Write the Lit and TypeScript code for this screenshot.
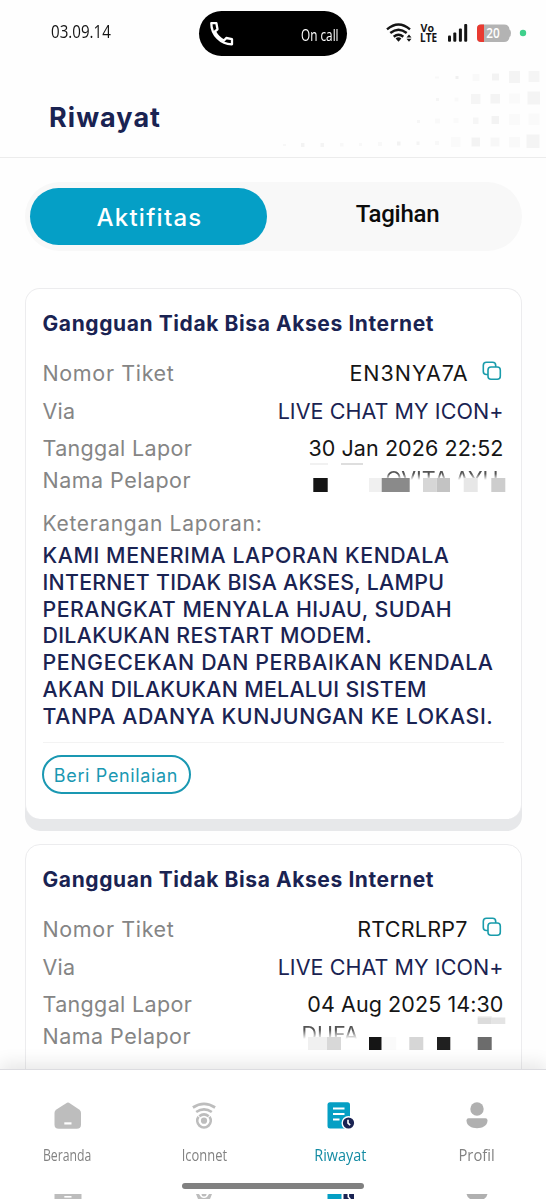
import { LitElement, html, svg, css } from "lit";
import { customElement, property } from "lit/decorators.js";

type Block = [number, number, number, number, string];

interface Ticket {
  title: string;
  code: string;
  codeTracking: number;
  via: string;
  date: string;
  name: string;
  nameClass: string;
  blocks: Block[];
  description?: [string, number][];
}

const TICKETS: Ticket[] = [
  {
    title: "Gangguan Tidak Bisa Akses Internet",
    code: "EN3NYA7A",
    codeTracking: 1,
    via: "LIVE CHAT MY ICON+",
    date: "30 Jan 2026 22:52",
    name: "OVITA AYU",
    nameClass: "first",
    blocks: [
      [10, 2, 18, 2, "#f1f1f1"],
      [41, 2, 22, 2, "#dedede"],
      [13.3, 17, 14.4, 14, "#151515"],
      [69, 17, 12.7, 14, "#f0f0f0"],
      [81.7, 17, 28, 14, "#8a8a8a"],
      [123, 17, 13.7, 14, "#d6d6d6"],
      [136.7, 17, 13.3, 14, "#c3c3c3"],
      [163.7, 17, 14, 14, "#e7e7e7"],
      [191.3, 17, 14, 14, "#cdcdcd"],
    ],
    description: [
      ["KAMI MENERIMA LAPORAN KENDALA", 0.59],
      ["INTERNET TIDAK BISA AKSES, LAMPU", 0.28],
      ["PERANGKAT MENYALA HIJAU, SUDAH", 0.5],
      ["DILAKUKAN RESTART MODEM.", 0.35],
      ["PENGECEKAN DAN PERBAIKAN KENDALA", 0.66],
      ["AKAN DILAKUKAN MELALUI SISTEM", 0.32],
      ["TANPA ADANYA KUNJUNGAN KE LOKASI.", 0.62],
    ],
  },
  {
    title: "Gangguan Tidak Bisa Akses Internet",
    code: "RTCRLRP7",
    codeTracking: 0.25,
    via: "LIVE CHAT MY ICON+",
    date: "04 Aug 2025 14:30",
    name: "DUFA",
    nameClass: "second",
    blocks: [
      [177.7, -1, 14, 4, "#f0f0f0"],
      [177.7, 0.5, 14, 6.5, "#dcdcdc"],
      [191.7, 0.5, 13.6, 6.5, "#e4e4e4"],
      [8, 20, 19, 13, "#f0f0f0"],
      [27, 20, 14, 13, "#d8d8d8"],
      [69, 20, 12.7, 13, "#151515"],
      [81.7, 20, 14.6, 13, "#fafafa"],
      [109.3, 20, 14, 13, "#d6d6d6"],
      [137, 20, 13.3, 13, "#202020"],
      [177.7, 20, 14, 13, "#6c6c6c"],
    ],
  },
];

const DOTS: Block[] = [
  [435, 76.5, 4, 2, "#f8f8f8"], [455.5, 76, 3, 3, "#f0f0f0"], [472.5, 74, 7, 7, "#f9f9f9"],
  [492, 73.5, 7, 7, "#f3f3f3"], [509, 71, 11, 12, "#f4f4f4"], [528.5, 71, 11, 11, "#f5f5f5"],
  [436, 98, 3, 3, "#f5f5f5"], [454.5, 97.5, 4, 4, "#f9f9f9"], [471, 94, 9.5, 10, "#f5f5f5"],
  [490.5, 94, 9.5, 9.5, "#f4f4f4"], [509, 93.5, 11, 10, "#fafafa"], [527.5, 91.5, 12.5, 13, "#f4f4f4"],
  [417, 120, 3, 3, "#f6f6f6"], [435, 118.5, 5, 5, "#f9f9f9"], [453.5, 118, 5, 5, "#fafafa"],
  [473, 117.5, 5.5, 6.5, "#f6f6f6"], [491.5, 116, 7.5, 8, "#f3f3f3"], [509, 114, 11, 11, "#fafafa"], [528.5, 113.5, 11, 11.5, "#fafafa"],
  [283, 144, 3, 2, "#f7f7f7"], [301, 143, 3.5, 4, "#f3f3f3"], [320.5, 143, 3.5, 4, "#f4f4f4"],
  [340, 143, 3.5, 3.5, "#f8f8f8"], [359, 143, 3, 3, "#f8f8f8"], [378, 142, 4, 4, "#f8f8f8"],
  [397, 141.5, 3.5, 4, "#f2f2f2"], [416.5, 141.5, 3, 3.5, "#f4f4f4"], [435, 141, 4, 4, "#f8f8f8"],
  [451, 137, 9.5, 10, "#fafafa"], [471.5, 137.5, 8.5, 9, "#f3f3f3"], [490.5, 137.5, 9, 9, "#f7f7f7"],
  [509, 137, 11, 10.5, "#f9f9f9"], [526.5, 134.5, 13, 13.5, "#f4f4f4"],
];

const rects = (blocks: Block[]) =>
  blocks.map(([x, y, w, h, fill]) => svg`<rect x=${x} y=${y} width=${w} height=${h} fill=${fill}></rect>`);

@customElement("status-bar")
class StatusBar extends LitElement {
  static styles = css`
    :host { display: flex; position: relative; height: 66px; align-items: center; font-family: "Open Sans", sans-serif; }
    .time { margin-left: 51px; width: 148px; font-size: 18px; line-height: 24px; color: #151515; margin-top: -4px; }
    .narrow { display: inline-block; transform-origin: left center; white-space: nowrap; }
    .time .narrow { transform: scaleX(0.84); }
    .island { width: 148px; height: 45px; border-radius: 23px; background: #000; display: flex; align-items: center; justify-content: space-between; box-sizing: border-box; padding: 0 8px 0 10px; color: #fff; margin-top: 1px; }
    .call { width: 38px; font-size: 15.5px; line-height: 20px; font-weight: 500; margin-top: 2px; }
    .call .narrow { transform: scaleX(0.76); }
    .icons { display: block; flex: none; margin-left: 37px; }
    .icons text { font-family: "Open Sans", sans-serif; }
  `;
  render() {
    return html`
      <div class="time"><span class="narrow">03.09.14</span></div>
      <div class="island">
        <svg width="26" height="26" viewBox="0 0 26 26" fill="none" stroke="#fff" stroke-width="2.3" stroke-linejoin="round">
          <path d="M2.3 2.2H7.4L8.5 8.3L5.9 10.5C8 14.5 11 17.5 15 19.6L17.3 17L23 18.2V23.3C12 23.5 2.3 14 2.3 2.2Z"></path>
        </svg>
        <div class="call"><span class="narrow">On call</span></div>
      </div>
      <svg class="icons" width="162" height="66" viewBox="384 0 162 66">
        <g fill="none" stroke="#151515" stroke-width="2.4">
          <path d="M387 29.3Q398.500 19.600 410 29.300"></path>
          <path d="M390.300 33Q398.500 26.300 406.700 33"></path>
          <path d="M393.700 36.700Q398.500 32.800 403.300 36.700"></path>
        </g>
        <path d="M395.600 38.500Q398.500 36.200 401.400 38.500L398.500 41.700Z" fill="#151515"></path>
        <path d="M406.500 37.600L409 34.500L411.500 37.600ZM406.500 38.800H411.500L409 41.800Z" fill="#151515"></path>
        <text x="420.500" y="31.800" font-size="11" font-weight="700" textLength="13.500" lengthAdjust="spacingAndGlyphs" fill="#151515">Vo</text>
        <text x="420" y="42" font-size="11.500" font-weight="700" textLength="17" lengthAdjust="spacingAndGlyphs" fill="#151515">LTE</text>
        <g fill="#151515">
          <rect x="448" y="35.500" width="3" height="6.200" rx="1"></rect>
          <rect x="453.300" y="32.500" width="3" height="9.200" rx="1"></rect>
          <rect x="458.900" y="28.500" width="3" height="13.200" rx="1"></rect>
          <rect x="464.200" y="24" width="3" height="17.700" rx="1"></rect>
        </g>
        <path d="M481 24.500H504Q509 24.500 509.500 29.500Q511 30 511 33Q511 36 509.500 37Q509 42 504 42H481Q477 42 477 38V28.500Q477 24.500 481 24.500Z" fill="#b3b3b3"></path>
        <path d="M484 24.500H481Q477 24.500 477 28.500V38Q477 42 481 42H484Z" fill="#e93a31"></path>
        <text x="486.300" y="38.300" font-size="14.500" font-weight="600" textLength="13.500" lengthAdjust="spacingAndGlyphs" fill="#fff">20</text>
        <circle cx="523" cy="33" r="3.200" fill="#3fd08c"></circle>
      </svg>
    `;
  }
}

@customElement("ticket-card")
class TicketCard extends LitElement {
  @property({ attribute: false }) ticket!: Ticket;
  static styles = css`
    :host { display: block; box-sizing: border-box; border: 1.500px solid #ececee; border-radius: 15px; padding: 20.500px 17px 80px; background: #fff; font-family: Inter, sans-serif; color: #151515; white-space: nowrap; }
    :host([full]) { height: 531px; padding-bottom: 24px; box-shadow: 0 12px 0 #e7e8ea; border-bottom: 0; }
    .title { font-size: 21px; line-height: 28px; font-weight: 700; color: #1a2352; letter-spacing: 0.590px; margin-bottom: 17px; }
    .row { display: flex; justify-content: space-between; align-items: center; height: 37.500px; font-size: 21.500px; line-height: 26px; }
    .row.last { height: 26px; position: relative; }
    .label { color: #858585; letter-spacing: 0.200px; }
    .label.number { letter-spacing: 0.640px; }
    .label.day { letter-spacing: 0.340px; }
    .label.person { letter-spacing: 0.480px; }
    .copy { display: flex; align-items: center; gap: 14px; padding-right: 2px; }
    .copy svg { margin-top: -4px; }
    .via { color: #1a2352; letter-spacing: 0.060px; }
    .date { letter-spacing: 0.080px; }
    .mask { position: absolute; left: 257.500px; top: -6px; }
    .name { position: absolute; height: 9px; top: 4px; overflow: hidden; line-height: 26px; -webkit-mask-image: linear-gradient(#000 30%, transparent); mask-image: linear-gradient(#000 30%, transparent); }
    .name span { display: block; margin-top: -5px; }
    .name.first { left: 343px; color: #555; }
    .name.second { left: 259px; top: 2.500px; height: 13px; color: #555; }
    .label.caption { font-size: 21px; line-height: 27px; margin-top: 17px; letter-spacing: 0.690px; }
    .desc { font-size: 21.300px; line-height: 26.830px; font-weight: 500; color: #1a2352; margin-top: 5px; }
    .rule { height: 1px; background: #f3f3f3; margin: 12px 0; }
    .rate { font: 400 18px/36px Inter, sans-serif; letter-spacing: 0.650px; height: 39.500px; width: 149px; box-sizing: border-box; border: 2px solid #1a98b2; border-radius: 20px; color: #1a98b2; background: #fff; padding: 2px 0 0; margin: 0 0 0 -1px; display: flex; align-items: center; justify-content: center; }
  `;
  render() {
    const t = this.ticket;
    return html`
      <div class="title">${t.title}</div>
      <div class="row">
        <span class="label number">Nomor Tiket</span>
        <span class="copy"><span style="letter-spacing:${t.codeTracking}px;margin-right:${-t.codeTracking}px">${t.code}</span>
          <svg width="20" height="20" viewBox="0 0 20 20" fill="none" stroke="#199cab" stroke-width="1.600">
            <rect x="6" y="6" width="12.300" height="12.300" rx="3"></rect>
            <path d="M6 13.500H4.500Q1.300 13.500 1.300 10.500V4.500Q1.300 1.300 4.500 1.300H10.500Q13.700 1.300 13.700 4.500V6"></path>
          </svg>
        </span>
      </div>
      <div class="row"><span class="label">Via</span><span class="via">${t.via}</span></div>
      <div class="row"><span class="label day">Tanggal Lapor</span><span class="date">${t.date}</span></div>
      <div class="row last">
        <span class="label person">Nama Pelapor</span>
        <span class="name ${t.nameClass}"><span>${t.name}</span></span>
        <svg class="mask" width="208" height="36" viewBox="0 0 208 36" overflow="visible">${rects(t.blocks)}</svg>
      </div>
      ${t.description
        ? html`
            <div class="label caption">Keterangan Laporan:</div>
            <div class="desc">${t.description.map(([line, tracking]) => html`<div style="letter-spacing:${tracking}px">${line}</div>`)}</div>
            <div class="rule"></div>
            <button class="rate">Beri Penilaian</button>
          `
        : ""}
    `;
  }
}

const HOME = svg`<path d="M13 0.800Q14 0.200 15 0.800L25.500 7.800Q27 9 27 11V22.500Q27 26.800 22.700 26.800H4.800Q0.500 26.800 0.500 22.500V11Q0.500 9 2 7.800Z" fill="#bdbdbd"></path><rect x="10.300" y="20.300" width="7.200" height="2.200" fill="#fff"></rect>`;
const WIFI = svg`<g fill="none" stroke="#bdbdbd" stroke-width="2.700"><path d="M2.900 5.500Q14 -1.800 25.100 5.500"></path><path d="M6.200 10Q14 4.600 21.800 10"></path><path d="M9.300 14.200Q14 10.400 18.700 14.200"></path><path d="M8.500 14.800A6.700 6.700 0 1 0 19.500 14.800"></path></g><circle cx="14" cy="18.700" r="3.100" fill="#bdbdbd"></circle>`;
const HISTORY = svg`<rect x="0.500" y="0.300" width="22.500" height="26.300" rx="2.500" fill="#059fc4"></rect><path d="M6 6.500H17.500M6 12H17.500M6 17.500H12.500" stroke="#fff" stroke-width="2"></path><circle cx="21.500" cy="21" r="7" fill="#fff"></circle><circle cx="21.500" cy="21" r="5.600" fill="#1a2352"></circle><path d="M21 17.800V21.200L23.200 23.200" stroke="#fff" stroke-width="1.600" fill="none"></path>`;
const USER = svg`<circle cx="14" cy="7" r="6.700" fill="#b0b0b0"></circle><path d="M5.500 16.300H22.500Q24.500 16.300 24.500 18.500C24.500 28.800 3.500 28.800 3.500 18.500Q3.500 16.300 5.500 16.300Z" fill="#b0b0b0"></path>`;

@customElement("bottom-nav")
class BottomNav extends LitElement {
  static styles = css`
    :host { display: block; position: relative; height: 131px; background: #fff; border-top: 1.500px solid #dcdce0; box-sizing: border-box; font-family: "Open Sans", sans-serif; box-shadow: 0 -6px 16px rgba(0, 0, 0, 0.090); overflow: visible; }
    .items { display: grid; grid-template-columns: 135px 138px 135px 138px; padding-top: 31.500px; }
    .item { display: flex; flex-direction: column; align-items: center; gap: 14.500px; color: #828282; }
    .item svg { display: block; }
    .item.active { color: #138ba3; }
    .label { font-size: 16.800px; line-height: 22px; height: 22px; font-weight: 500; white-space: nowrap; }
    .handle { width: 182px; height: 6px; border-radius: 3px; background: #808080; margin: 16.500px auto 0; }
    .echo { display: grid; grid-template-columns: 135px 138px 135px 138px; justify-items: center; margin-top: 5.500px; height: 5px; overflow: hidden; }
    .echo svg { display: block; }
  `;
  render() {
    const items = [
      { label: "Beranda", icon: HOME, active: false, scale: 0.73 },
      { label: "Iconnet", icon: WIFI, active: false, scale: 0.77 },
      { label: "Riwayat", icon: HISTORY, active: true, scale: 0.86 },
      { label: "Profil", icon: USER, active: false, scale: 0.88 },
    ];
    return html`
      <div class="items">
        ${items.map((i) => html`
          <div class="item ${i.active ? "active" : ""}">
            <svg width="28" height="28" viewBox="0 0 28 28">${i.icon}</svg>
            <span class="label" style="transform:scaleX(${i.scale})">${i.label}</span>
          </div>`)}
      </div>
      <div class="handle"></div>
      <div class="echo">
        <svg width="28" height="5"><rect x="0.500" width="27" height="5" fill="#bdbdbd"></rect><rect x="10.300" y="2" width="7.200" height="1.600" fill="#fff"></rect></svg>
        <svg width="28" height="5"><path d="M6 0H9L11 3Q14 5 17 3L19 0H22L20 5H8Z" fill="#bdbdbd"></path><circle cx="14" cy="0" r="2.500" fill="#bdbdbd"></circle></svg>
        <svg width="28" height="5"><rect x="0.500" width="14" height="5" fill="#059fc4"></rect><path d="M16.500 0H27V5H16.500Z" fill="#1a2352"></path><path d="M21.300 0V3L23.300 5" stroke="#fff" stroke-width="1.600" fill="none"></path></svg>
        <svg width="28" height="5"><path d="M3.500 0H24.500Q24 3 21 5H7Q4 3 3.500 0Z" fill="#b0b0b0"></path></svg>
      </div>
    `;
  }
}

@customElement("app-root")
class AppRoot extends LitElement {
  static styles = css`
    :host { display: flex; flex-direction: column; position: relative; width: 546px; height: 1200px; overflow: hidden; background: #fefefe; font-family: Inter, sans-serif; }
    .dots { position: absolute; left: 0; top: 0; }
    .header { position: relative; height: 91.500px; flex: none; box-sizing: border-box; border-bottom: 1.500px solid #ececec; padding: 36px 0 0 49px; }
    .heading { margin: 0; font-size: 27px; line-height: 32px; font-weight: 700; color: #1a2352; letter-spacing: 1.050px; }
    .content { flex: 1; min-height: 0; overflow: hidden; padding: 24.500px 24.500px 0; display: flex; flex-direction: column; }
    .tabs { display: flex; flex: none; box-sizing: border-box; height: 69px; border-radius: 35px; background: #f8f8f8; padding: 6px 5.500px; margin-bottom: 37px; }
    .tab { display: flex; align-items: center; justify-content: center; box-sizing: border-box; border-radius: 29px; font-size: 24px; }
    .tab.active { flex: none; width: 237px; background: #059fc6; color: #fff; font-weight: 500; padding: 1.500px 0 0 2px; letter-spacing: 1.250px; }
    .tab.other { flex: 1; padding: 0 0 5px 12px; font-family: Roboto, sans-serif; font-weight: 500; color: #0b0b0b; letter-spacing: -0.250px; }
    ticket-card { flex: none; }
    .spacer { height: 25px; flex: none; }
    bottom-nav { flex: none; z-index: 1; }
    status-bar { flex: none; }
  `;
  render() {
    return html`
      <svg class="dots" width="546" height="156" viewBox="0 0 546 156">${rects(DOTS)}</svg>
      <status-bar></status-bar>
      <div class="header"><h1 class="heading">Riwayat</h1></div>
      <div class="content">
        <div class="tabs">
          <div class="tab active">Aktifitas</div>
          <div class="tab other">Tagihan</div>
        </div>
        <ticket-card full .ticket=${TICKETS[0]}></ticket-card>
        <div class="spacer"></div>
        <ticket-card .ticket=${TICKETS[1]}></ticket-card>
      </div>
      <bottom-nav></bottom-nav>
    `;
  }
}
